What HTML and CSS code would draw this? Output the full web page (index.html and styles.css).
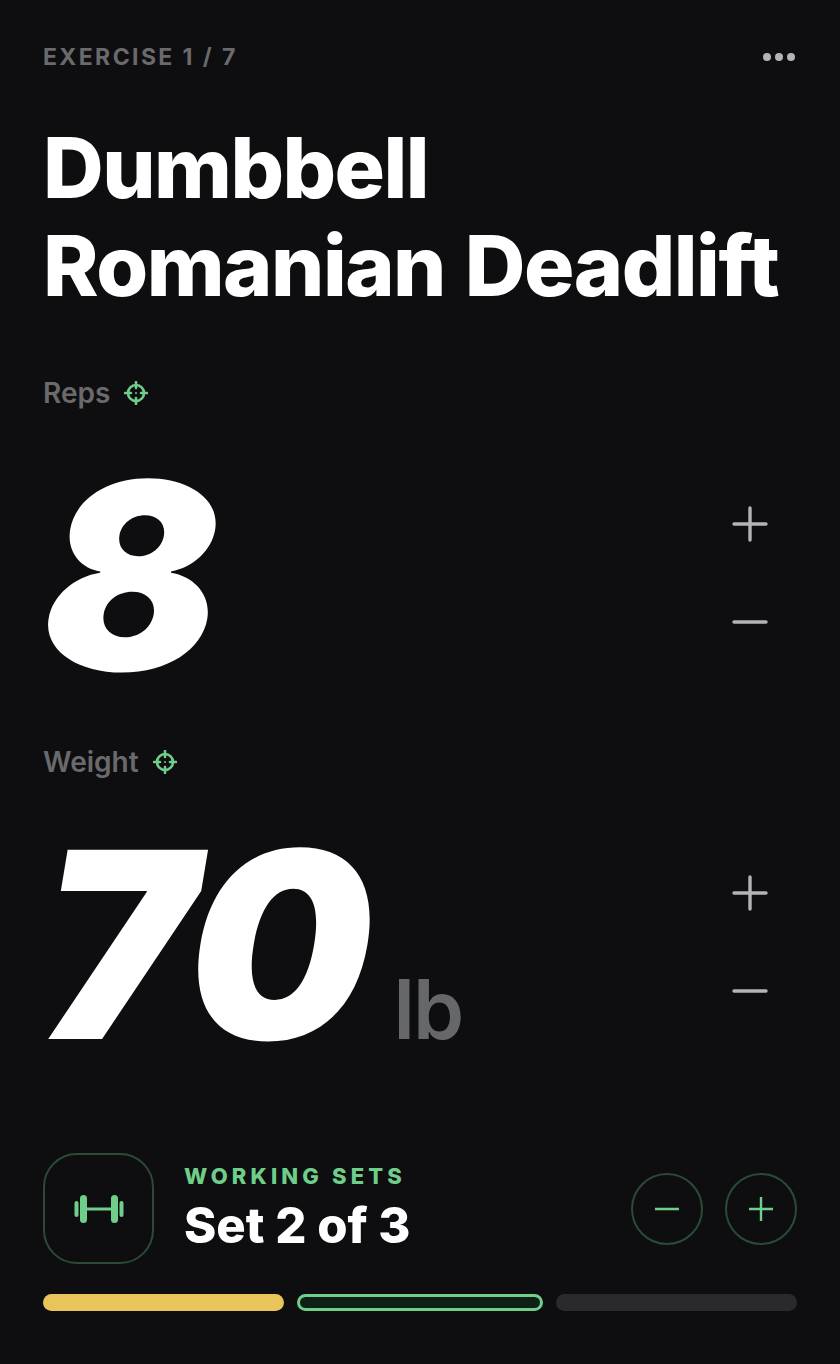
FILE: index.html
```html
<!DOCTYPE html>
<html lang="en">
<head>
  <meta charset="UTF-8" />
  <meta name="viewport" content="width=device-width, initial-scale=1.0" />
  <title>Workout</title>
  <link rel="stylesheet" href="styles.css">
</head>
<body>
  <header class="top">
    <span class="progress">EXERCISE 1 / 7</span>
    <button class="more" aria-label="More"><i></i><i></i><i></i></button>
  </header>

  <h1>Dumbbell<br>Romanian Deadlift</h1>

  <section class="metric metric-reps">
    <div class="label">
      <span>Reps</span>
      <svg class="target" viewBox="0 0 24 24"><circle cx="12" cy="12" r="8"/><path d="M12 1v6M12 17v6M1 12h6M17 12h6"/><circle class="dot" cx="12" cy="12" r="1"/></svg>
    </div>
    <div class="row">
      <div class="value">8</div>
      <div class="stepper">
        <svg viewBox="0 0 36 36"><path d="M18 2v32M2 18h32"/></svg>
        <svg viewBox="0 0 36 36"><path d="M2 18h32"/></svg>
      </div>
    </div>
  </section>

  <section class="metric metric-weight">
    <div class="label">
      <span>Weight</span>
      <svg class="target" viewBox="0 0 24 24"><circle cx="12" cy="12" r="8"/><path d="M12 1v6M12 17v6M1 12h6M17 12h6"/><circle class="dot" cx="12" cy="12" r="1"/></svg>
    </div>
    <div class="row">
      <div class="value value-wide">70<span class="unit">lb</span></div>
      <div class="stepper">
        <svg viewBox="0 0 36 36"><path d="M18 2v32M2 18h32"/></svg>
        <svg viewBox="0 0 36 36"><path d="M2 18h32"/></svg>
      </div>
    </div>
  </section>

  <footer class="sets">
    <div class="sets-row">
      <div class="icon-box">
        <svg viewBox="0 0 50 30">
          <path class="thin" d="M12 15h26"/>
          <path class="thick" d="M9.500 4.500v21M40.500 4.500v21"/>
          <path class="mid" d="M2.500 9v12M47.500 9v12"/>
        </svg>
      </div>
      <div class="sets-text">
        <div class="sets-kicker">WORKING SETS</div>
        <div class="sets-title">Set 2 of 3</div>
      </div>
      <button class="round" aria-label="Remove set"><svg viewBox="0 0 24 24"><path d="M0 12h24"/></svg></button>
      <button class="round" aria-label="Add set"><svg viewBox="0 0 24 24"><path d="M12 0v24M0 12h24"/></svg></button>
    </div>
    <div class="bars">
      <div class="bar bar-done"></div>
      <div class="bar bar-current"></div>
      <div class="bar"></div>
    </div>
  </footer>
</body>
</html>
```

FILE: styles.css
```css
* {
  box-sizing: border-box;
}
body {
  margin: 0;
  height: 1364px;
  padding: 0 43px;
  overflow: hidden;
  font-family: Inter, "Liberation Sans", sans-serif;
  background-color: #0e0e10;
  color: #fff;
}
button {
  background: none;
  border: none;
  padding: 0;
}

.top {
  display: flex;
  justify-content: space-between;
  align-items: center;
  padding-top: 44px;
  height: 70px;
}
.progress {
  font-size: 23px;
  font-weight: 700;
  letter-spacing: 2.4px;
  color: #6a6a6c;
}
.more {
  display: flex;
  gap: 4px;
  margin-right: 2px;
}
.more i {
  width: 8px;
  height: 8px;
  border-radius: 50%;
  background-color: #b4b4b6;
}

h1 {
  margin: 49px 0 0;
  font-size: 84px;
  line-height: 98px;
  font-weight: 800;
  letter-spacing: -1.5px;
  word-spacing: 3px;
  white-space: nowrap;
}

.metric-reps {
  margin-top: 61px;
}
.metric-weight {
  margin-top: 29px;
}
.label {
  display: flex;
  align-items: center;
  gap: 14px;
  height: 34px;
  font-size: 28px;
  font-weight: 600;
  color: #6a6a6c;
}
.target {
  width: 24px;
  height: 24px;
  fill: none;
  stroke: #6fce8a;
  stroke-width: 2.6;
  stroke-linecap: round;
}
.target .dot {
  fill: #6fce8a;
  stroke: none;
}

.row {
  display: flex;
  justify-content: space-between;
  height: 306px;
  padding-top: 26px;
}
.value {
  font-size: 260px;
  line-height: 280px;
  font-weight: 900;
  font-style: italic;
  letter-spacing: -5px;
  white-space: nowrap;
}
.value-wide {
  margin-left: -2px;
  letter-spacing: -4px;
}
.unit {
  margin-left: 25px;
  font-size: 82px;
  font-weight: 600;
  font-style: normal;
  letter-spacing: -2px;
  color: #66676a;
}
.stepper {
  display: flex;
  flex-direction: column;
  gap: 62px;
  padding: 70px 29px 0 0;
}
.stepper svg {
  width: 36px;
  height: 36px;
  fill: none;
  stroke: #b4b4b6;
  stroke-width: 3.4;
  stroke-linecap: round;
}

.sets {
  margin-top: 68px;
}
.sets-row {
  display: flex;
  align-items: center;
}
.icon-box {
  display: flex;
  align-items: center;
  justify-content: center;
  width: 111px;
  height: 111px;
  border: 2px solid #2b4a38;
  border-radius: 34px;
}
.icon-box svg {
  width: 50px;
  height: 30px;
  fill: none;
  stroke: #6fce8a;
  stroke-linecap: round;
}
.thin {
  stroke-width: 3;
  stroke-linecap: butt;
}
.thick {
  stroke-width: 7;
}
.mid {
  stroke-width: 4;
}
.sets-text {
  flex: 1;
  margin-left: 30px;
}
.sets-kicker {
  font-size: 22px;
  line-height: 28px;
  font-weight: 800;
  letter-spacing: 4.15px;
  color: #6fce8a;
}
.sets-title {
  margin-top: 7px;
  font-size: 49px;
  line-height: 58px;
  font-weight: 800;
  letter-spacing: 0;
}
.round {
  display: flex;
  align-items: center;
  justify-content: center;
  width: 72px;
  height: 72px;
  margin-left: 22px;
  border: 2px solid #2b4a38;
  border-radius: 50%;
}
.round svg {
  width: 24px;
  height: 24px;
  fill: none;
  stroke: #6fce8a;
  stroke-width: 2.4;
  stroke-linecap: round;
}

.bars {
  display: flex;
  gap: 13px;
  margin-top: 30px;
}
.bar {
  flex: 1;
  height: 17px;
  border-radius: 9px;
  background-color: #2a2a2c;
}
.bar-done {
  background-color: #e8c45a;
}
.bar-current {
  background-color: #0f2116;
  border: 3px solid #6fce8a;
}
```
